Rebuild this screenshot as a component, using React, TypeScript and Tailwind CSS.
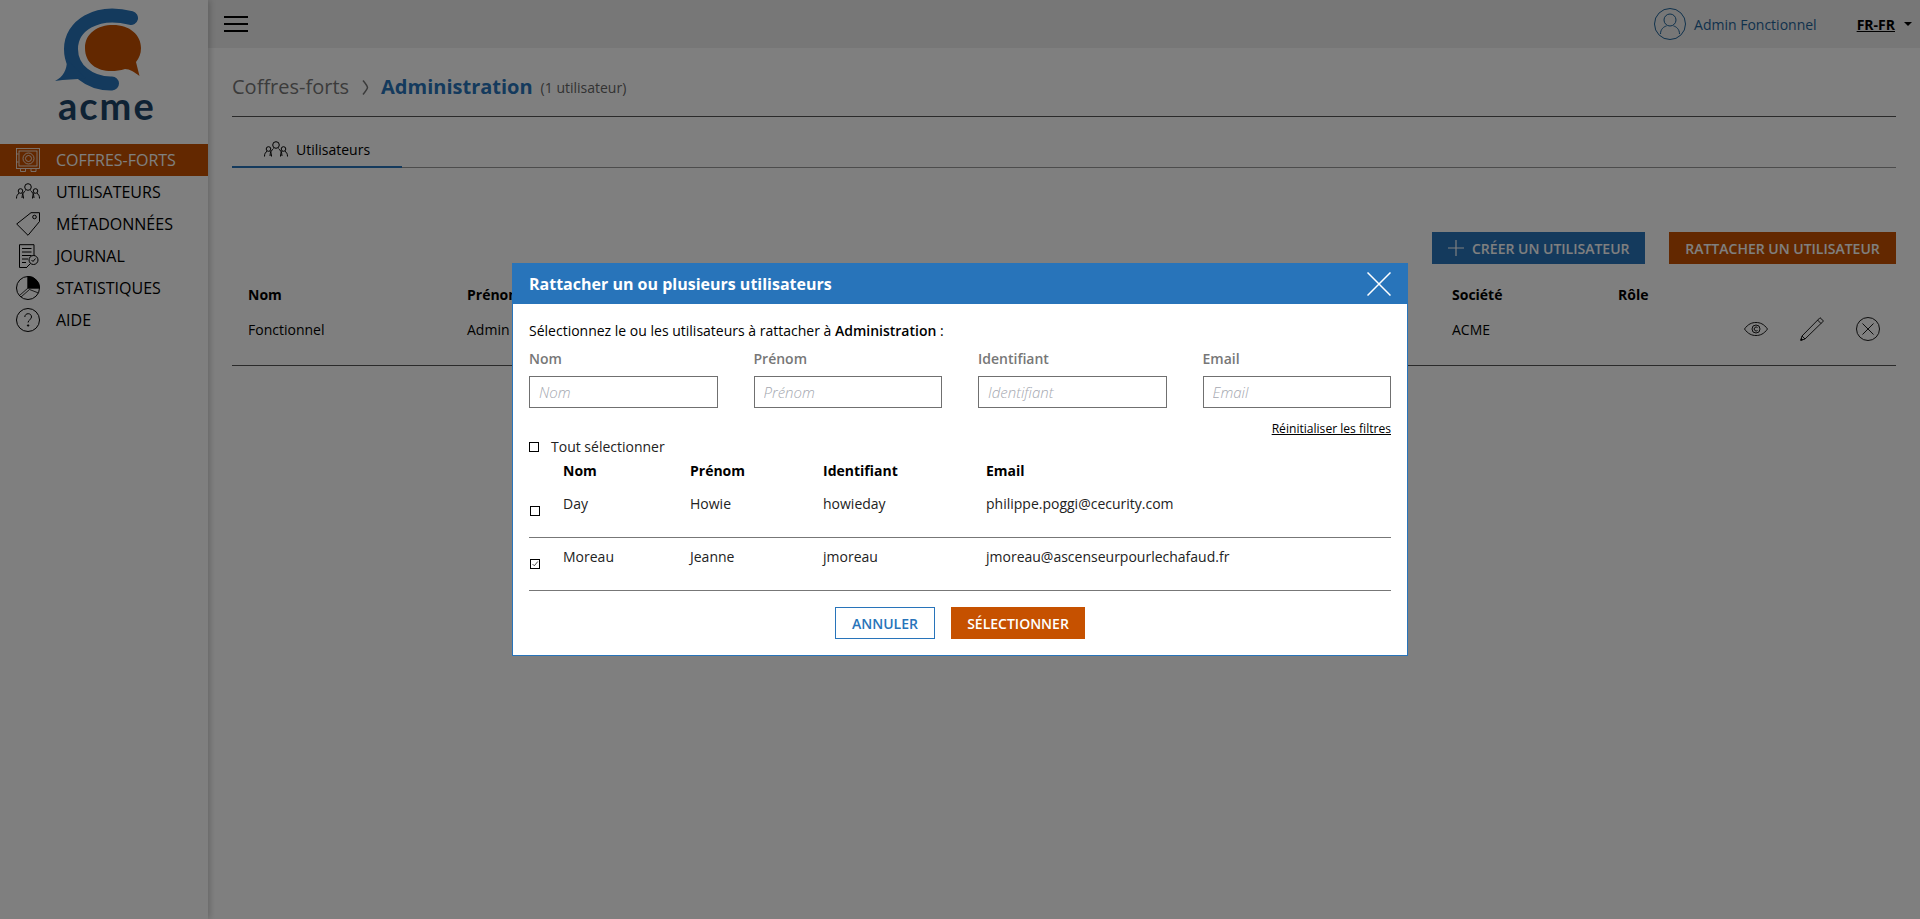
import React from "react";

const font = "font-['Open_Sans',sans-serif]";

function Logo() {
  return (
    <div className="flex flex-col items-start pl-[52px] pt-[6px] h-[144px]">
      <svg width="92" height="86" viewBox="52 6 92 86" fill="none">
        <path d="M131 18C96 9 71 26 71 49C71 70 90 84 112 83.500" stroke="#2874ba" strokeWidth="14" strokeLinecap="round" />
        <path d="M55 81C63 77 67 70 67 60L86 78C75 80 65 79 55 81Z" fill="#2874ba" />
        <path d="M85 48C85 33 98 25 113 25C130 25 141 35 141 48C141 54 139 58 136 62L139.500 76C134 72 130 69 125 69C105 75 85 68 85 48Z" fill="#c65100" />
      </svg>
      <span className="text-[38px] leading-[30px] font-['Lato',sans-serif] font-bold tracking-[2px] text-[#1d4568] ml-[6px] -mt-[2px]">acme</span>
    </div>
  );
}

function SafeIcon({ c }: { c: string }) {
  return (
    <svg width="24" height="24" viewBox="0 0 24 24" fill="none" stroke={c} strokeWidth="0.8">
      <rect x="0.500" y="0.500" width="23" height="20" />
      <rect x="3" y="3" width="18" height="15" />
      <circle cx="12.500" cy="10.500" r="5.500" />
      <circle cx="12.500" cy="10.500" r="3" />
      <path d="M0.500 6h2M0.500 14h2M4.500 21v2.500h5V21M15 21v2.500h5V21" />
    </svg>
  );
}
function UsersIcon({ c = "#000", s = 24 }: { c?: string; s?: number }) {
  return (
    <svg width={s} height={s} viewBox="0 0 24 24" fill="none" stroke={c} strokeWidth="1">
      <circle cx="12" cy="7" r="3.300" />
      <path d="M6 18c0-4 2-6 3.500-7.500M18 18c0-4-2-6-3.500-7.500" />
      <circle cx="4.500" cy="11" r="2.300" />
      <path d="M0.500 18.500c0-3 1-4 2.500-5.300" />
      <path d="M6 13.200c1 1 1.500 3 1.500 5.300" />
      <circle cx="19.500" cy="11" r="2.300" />
      <path d="M23.500 18.500c0-3-1-4-2.500-5.300M18 13.200c-1 1-1.500 3-1.500 5.300" />
    </svg>
  );
}
function TagIcon() {
  return (
    <svg width="24" height="24" viewBox="0 0 24 24" fill="none" stroke="#000" strokeWidth="1">
      <path d="M15 0.700H23.500V9.500L12 23.300L0.700 12Z" />
      <circle cx="18.500" cy="5" r="1.800" />
    </svg>
  );
}
function JournalIcon() {
  return (
    <svg width="24" height="24" viewBox="0 0 24 24" fill="none" stroke="#000" strokeWidth="1">
      <path d="M3.500 0.700H18V12M3.500 0.700V23.500H11" />
      <path d="M6 4.500H15.500M6 8H15.500M6 11.500H15.500M6 15H12M6 18.500H10" />
      <circle cx="17.500" cy="16" r="4.500" />
      <path d="M15.500 16l1.500 1.500 2.500-3M14.500 19.500L11 23" />
    </svg>
  );
}
function PieIcon() {
  return (
    <svg width="24" height="24" viewBox="0 0 24 24" fill="none" stroke="#000" strokeWidth="1">
      <circle cx="12" cy="12" r="11.500" />
      <path d="M12 0.500A11.500 11.500 0 0 1 23.500 12H12Z" fill="#000" />
      <path d="M12 0.500V12L3.500 19.500M13.500 13.500L5 21M13.500 13.500L22.500 17M12 12H23" strokeWidth="0.800" />
    </svg>
  );
}
function HelpIcon() {
  return (
    <svg width="24" height="24" viewBox="0 0 24 24" fill="none" stroke="#000" strokeWidth="1">
      <circle cx="12" cy="12" r="11.500" />
      <path d="M8.800 9c0-2 1.500-3.300 3.400-3.300S15.500 7 15.500 9c0 2.600-3.400 2.800-3.400 5.500" />
      <circle cx="12.100" cy="17.500" r="0.700" fill="#000" />
    </svg>
  );
}

const nav: [string, React.ReactNode][] = [
  ["UTILISATEURS", <UsersIcon />],
  ["MÉTADONNÉES", <TagIcon />],
  ["JOURNAL", <JournalIcon />],
  ["STATISTIQUES", <PieIcon />],
  ["AIDE", <HelpIcon />],
];

function Sidebar() {
  return (
    <aside className="w-[208px] shrink-0 bg-white shadow-[2px_0_6px_rgba(0,0,0,0.2)] z-10">
      <Logo />
      <nav className="flex flex-col">
        <div className="h-8 bg-[#c65100] flex items-center pl-4 gap-4 text-white text-base">
          <SafeIcon c="#fff" />
          <span>COFFRES-FORTS</span>
        </div>
        {nav.map(([t, i]) => (
          <div key={t} className="h-8 flex items-center pl-4 gap-4 text-base text-black">
            {i}
            <span>{t}</span>
          </div>
        ))}
      </nav>
    </aside>
  );
}

function TopBar() {
  return (
    <header className="h-12 bg-[#eeeeee] flex items-center pl-4 pr-[8px] shrink-0">
      <div className="flex flex-col justify-between w-6 h-4">
        <span className="block h-0.5 bg-black" />
        <span className="block h-0.5 bg-black" />
        <span className="block h-0.5 bg-black" />
      </div>
      <div className="ml-auto flex items-center">
        <svg width="32" height="32" viewBox="0 0 32 32" fill="none" stroke="#1f6399" strokeWidth="1">
          <circle cx="16" cy="16" r="15.500" />
          <circle cx="16" cy="12" r="6" />
          <path d="M6.500 26c0-5 3.500-7.500 6-8M25.500 26c0-5-3.500-7.500-6-8" />
        </svg>
        <span className="ml-2 text-[14px] text-[#1f6399]">Admin Fonctionnel</span>
        <span className="ml-10 text-[14px] font-bold underline text-black">FR-FR</span>
        <span className="ml-[9px] w-0 h-0 border-x-[4px] border-x-transparent border-t-[4px] border-t-black" />
      </div>
    </header>
  );
}

function Main() {
  return (
    <div className="flex-1 flex flex-col min-w-0">
      <TopBar />
      <main className="px-6 flex flex-col flex-1">
        <div className="h-[69px] border-b border-[#555] flex items-center pt-[10px]">
          <span className="text-[20px] text-[#777]">Coffres-forts</span>
          <span className="mx-[8px] w-[16px] flex justify-center">
            <svg width="7" height="15" viewBox="0 0 7 15" fill="none" stroke="#777" strokeWidth="1.500">
              <path d="M1 0.500C3 3 5.500 6 5.500 7.500S3 12 1 14.500" />
            </svg>
          </span>
          <span className="text-[20px] font-bold text-[#2874ba]">Administration</span>
          <span className="text-[14px] text-[#666] ml-2">(1 utilisateur)</span>
        </div>
        <div className="mt-[18px] h-[33px] border-b border-[#999] flex">
          <div className="w-[170px] h-[33px] border-b-2 border-[#2874ba] flex items-center pl-8 gap-2 text-[14px] text-black pb-0.5">
            <UsersIcon />
            <span>Utilisateurs</span>
          </div>
        </div>
        <div className="mt-[64px] flex justify-end gap-6">
          <button className="h-8 w-[213px] bg-[#2874ba] text-white text-[14px] font-semibold flex items-center pl-4 gap-2">
            <svg width="16" height="16" viewBox="0 0 16 16" stroke="#fff" strokeWidth="1.200">
              <path d="M8 0V16M0 8H16" />
            </svg>
            <span>CRÉER UN UTILISATEUR</span>
          </button>
          <button className="h-8 w-[227px] bg-[#c65100] text-white text-[14px] font-semibold">RATTACHER UN UTILISATEUR</button>
        </div>
        <div className="border-b border-[#555] mt-[13px] h-[89px]">
          <div className="grid grid-cols-[219px_985px_166px_1fr] pl-4 h-[34px] items-center text-[14px] font-bold text-black">
            <span>Nom</span>
            <span>Prénom</span>
            <span>Société</span>
            <span>Rôle</span>
          </div>
          <div className="grid grid-cols-[219px_985px_166px_1fr] pl-4 h-[36px] items-center text-[14px] text-black">
            <span>Fonctionnel</span>
            <span>Admin</span>
            <span>ACME</span>
            <div className="flex justify-end gap-8 pr-4">
              <svg width="24" height="24" viewBox="0 0 24 24" fill="none" stroke="#000" strokeWidth="0.900">
                <path d="M0.500 12C4 7 8 5.500 12 5.500S20 7 23.500 12C20 17 16 18.500 12 18.500S4 17 0.500 12Z" />
                <circle cx="12" cy="12" r="4" />
                <path d="M13.500 10.500a2 2 0 1 0 0 3" />
              </svg>
              <svg width="24" height="24" viewBox="0 0 24 24" fill="none" stroke="#000" strokeWidth="0.900">
                <path d="M20 0.700L23.500 4L5 22L0.800 23.300L2 19Z" />
                <path d="M17.500 3L21 6.500M2 19L5 22" />
                <path d="M0.800 23.300L2.500 22.700L1.300 21.500Z" fill="#000" />
              </svg>
              <svg width="24" height="24" viewBox="0 0 24 24" fill="none" stroke="#000" strokeWidth="0.900">
                <circle cx="12" cy="12" r="11.500" />
                <path d="M6.500 6.500L17.500 17.500M17.500 6.500L6.500 17.500" />
              </svg>
            </div>
          </div>
        </div>
      </main>
    </div>
  );
}

function Box({ checked }: { checked?: boolean }) {
  return (
    <span className="block w-[10px] h-[10px] border border-black bg-white">
      {checked && (
        <svg width="8" height="8" viewBox="0 0 8 8" fill="none" stroke="#222" strokeWidth="0.800" className="block">
          <path d="M1.500 4L3.300 5.800L6.800 1.500" />
        </svg>
      )}
    </span>
  );
}

const fields = ["Nom", "Prénom", "Identifiant", "Email"];
const rows = [
  { nom: "Day", prenom: "Howie", id: "howieday", mail: "philippe.poggi@cecurity.com", on: false },
  { nom: "Moreau", prenom: "Jeanne", id: "jmoreau", mail: "jmoreau@ascenseurpourlechafaud.fr", on: true },
];
const cols = "grid grid-cols-[34px_127px_133px_163px_1fr]";

function Modal() {
  return (
    <div className="w-[896px] h-[393px] bg-white border border-[#2874ba] flex flex-col">
      <div className="h-[41px] -mt-px -mx-px bg-[#2874ba] flex items-center justify-between px-[17px] shrink-0">
        <span className="text-white text-base font-bold">Rattacher un ou plusieurs utilisateurs</span>
        <svg width="24" height="24" viewBox="0 0 24 24" stroke="#fff" strokeWidth="1.500">
          <path d="M0.500 0.500L23.500 23.500M23.500 0.500L0.500 23.500" />
        </svg>
      </div>
      <div className="px-4 flex-1 flex flex-col">
        <p className="mt-[17px] leading-5 text-[14px] text-black">
          Sélectionnez le ou les utilisateurs à rattacher à <span className="font-semibold">Administration</span> :
        </p>
        <div className="mt-2 grid grid-cols-4 gap-x-9">
          {fields.map((f) => (
            <label key={f} className="flex flex-col">
              <span className="text-[14px] leading-5 font-semibold text-[#777]">{f}</span>
              <input
                placeholder={f}
                className="mt-[7px] h-8 w-full border border-[#707070] px-[9px] text-[15px] italic font-light outline-none placeholder:text-[#a5a8b0]"
              />
            </label>
          ))}
        </div>
        <div className="flex justify-end mt-[13px] h-[16px]">
          <span className="text-[12.100px] leading-4 underline text-black">Réinitialiser les filtres</span>
        </div>
        <div className="flex items-center h-[20px]">
          <Box />
          <span className="ml-3 text-[14px] leading-5 text-[#222]">Tout sélectionner</span>
        </div>
        <div className={`${cols} mt-[4px] text-[14px] leading-5 font-bold text-black`}>
          <span />
          <span>Nom</span>
          <span>Prénom</span>
          <span>Identifiant</span>
          <span>Email</span>
        </div>
        <div className="mt-[13px] flex flex-col gap-[9px]">
          {rows.map((r) => (
            <div key={r.id} className={`${cols} h-[44px] border-b border-[#777] text-[14px] leading-5 text-[#222]`}>
              <div className="pl-[1px] pt-[12px]">
                <Box checked={r.on} />
              </div>
              <span>{r.nom}</span>
              <span>{r.prenom}</span>
              <span>{r.id}</span>
              <span>{r.mail}</span>
            </div>
          ))}
        </div>
        <div className="mt-[16px] flex justify-center gap-4">
          <button className="h-8 w-[100px] border border-[#2874ba] text-[#2874ba] text-[14px] font-semibold">ANNULER</button>
          <button className="h-8 w-[134px] bg-[#c65100] text-white text-[14px] font-semibold">SÉLECTIONNER</button>
        </div>
      </div>
    </div>
  );
}

export default function App() {
  return (
    <div className={`${font} relative h-[919px] w-full overflow-hidden flex bg-white`}>
      <Sidebar />
      <Main />
      <div className="fixed inset-0 z-20 bg-black/50 flex justify-center pt-[263px]">
        <Modal />
      </div>
    </div>
  );
}
